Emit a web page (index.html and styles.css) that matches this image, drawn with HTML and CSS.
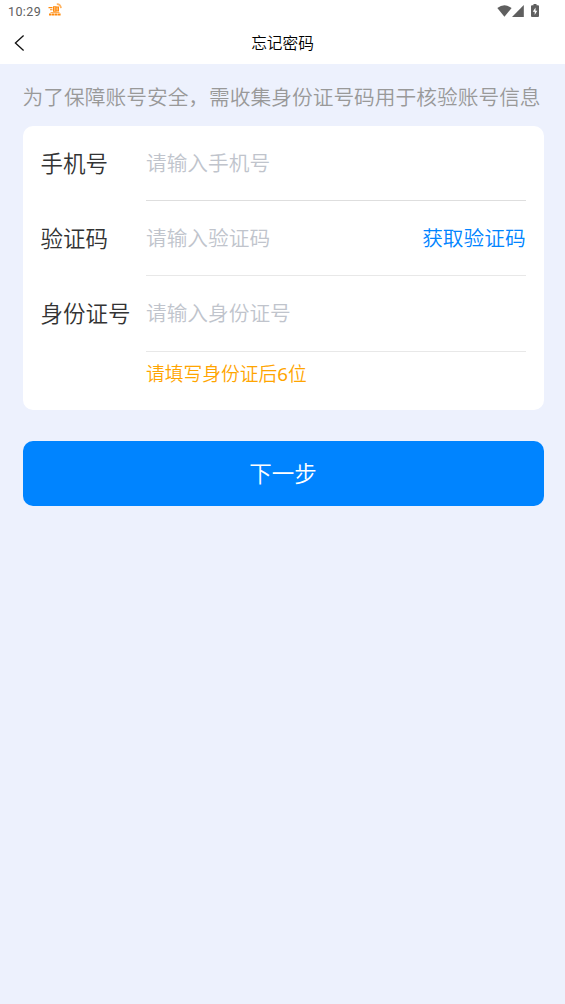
FILE: index.html
```html
<!DOCTYPE html>
<html lang="zh-CN">
<head>
<meta charset="utf-8">
<meta name="viewport" content="width=device-width, initial-scale=1">
<title>忘记密码</title>
<link rel="stylesheet" href="styles.css">
</head>
<body>
<div class="status-bar">
  <span class="clock">10:29</span>
  <svg class="app-badge" width="16" height="16" viewBox="0 0 16 16">
    <g fill="none" stroke="#ff8a0c">
      <path d="M.5 4.600h4M2 6.700h2.500" stroke-width="1.100"/>
      <path d="M5.600 3.800h2.300v4.400H5.600zM8 4.100h2.400v3.800H8.200M5.600 6h4.800" stroke-width="1.200"/>
      <path d="M8.800 1.200q3.600-.2 4.200 4" stroke-width="1.800" opacity=".65"/>
      <path d="M2.500 9.500h9" stroke-width=".7"/>
      <path d="M1 11.600h11.700" stroke-width="2" stroke-dasharray="2.600 .4"/>
    </g>
  </svg>
  <svg class="wifi" width="15" height="12" viewBox="0 0 15 12"><path d="M.3 3Q7.400-2.600 14.600 3L7.400 11.800z" fill="#5f5f5f"/></svg>
  <svg class="signal" width="12" height="12" viewBox="0 0 12 12"><path d="M11.800 0v12H0z" fill="#5f5f5f"/></svg>
  <svg class="battery" width="8" height="13" viewBox="0 0 8 13"><path d="M2.500 0h3v1.300H7q1 0 1 1V12q0 1-1 1H1q-1 0-1-1V2.300q0-1 1-1h1.500z" fill="#5f5f5f"/><path d="M4.500 3.500 1.800 7.700h1.900v3.200L6.300 6.700H4.500z" fill="#fff"/></svg>
</div>
<header class="nav">
  <svg class="back" width="11" height="18" viewBox="0 0 11 18"><path d="M9.600 1.400 1.400 9l8.200 7.600" fill="none" stroke="#111" stroke-width="1.300"/></svg>
  <h1 class="title">忘记密码</h1>
</header>
<main class="page">
  <p class="notice">为了保障账号安全，需收集身份证号码用于核验账号信息</p>
  <form class="card">
    <div class="row">
      <label class="label" for="phone">手机号</label>
      <div class="field field-first"><input id="phone" class="input" type="text" placeholder="请输入手机号"></div>
    </div>
    <div class="row">
      <label class="label" for="code">验证码</label>
      <div class="field"><input id="code" class="input" type="text" placeholder="请输入验证码"><span class="get-code">获取验证码</span></div>
    </div>
    <div class="row row-last">
      <label class="label" for="idno">身份证号</label>
      <div class="field"><input id="idno" class="input" type="text" placeholder="请输入身份证号"></div>
    </div>
    <p class="hint">请填写身份证后<span class="digit">6</span>位</p>
  </form>
  <button class="next" type="button">下一步</button>
</main>
</body>
</html>
```
FILE: styles.css
```css
* {
  box-sizing: border-box;
}
body {
  margin: 0;
  min-height: 1004px;
  background: #edf1fd;
  font-family: "Noto Sans CJK SC", sans-serif;
  font-weight: 350;
}
.status-bar {
  display: flex;
  align-items: center;
  height: 22px;
  padding: 0 26px 0 8px;
  background: #fff;
}
.clock {
  width: 39.500px;
  padding-top: 2px;
  font: 400 12.500px/22px Roboto, sans-serif;
  letter-spacing: 0.400px;
  color: #606060;
}
.app-badge {
  margin-bottom: 1px;
}
.wifi {
  margin-left: auto;
}
.signal {
  margin-left: 0.500px;
}
.battery {
  margin-left: 7px;
  margin-bottom: 1px;
}
.nav {
  display: grid;
  grid-template-columns: 40px 1fr 40px;
  align-items: center;
  height: 42px;
  background: #fff;
}
.back {
  margin-left: 14px;
}
.title {
  margin: 0;
  text-align: center;
  font-size: 15.700px;
  line-height: 24px;
  font-weight: 350;
  color: #000;
}
.page {
  padding: 17px 21.400px 0 22.600px;
}
.notice {
  margin: 0 0 14.600px;
  font-size: 20.720px;
  line-height: 30px;
  color: #999;
  white-space: nowrap;
}
.card {
  height: 284.700px;
  padding: 0 18px;
  border-radius: 10px;
  background: #fff;
}
.row {
  display: grid;
  grid-template-columns: 105.400px 1fr;
  height: 75.200px;
}
.row-last {
  height: 76px;
}
.label {
  font-size: 22.500px;
  line-height: 72px;
  color: #333;
  white-space: nowrap;
}
.field {
  display: flex;
  align-items: center;
  padding-bottom: 1.500px;
  border-bottom: 1px solid #e8e8e8;
}
.row-last .field {
  padding-bottom: 2.500px;
}
.field-first {
  border-bottom-color: #dedede;
}
.input {
  flex: 1;
  min-width: 0;
  height: 40px;
  padding: 0;
  border: 0;
  outline: 0;
  background: transparent;
  font: 350 20.700px/40px "Noto Sans CJK SC", sans-serif;
}
.input::placeholder {
  color: #c0c4cc;
}
.get-code {
  font-size: 20.700px;
  line-height: 40px;
  color: #0084ff;
}
.hint {
  margin: 8px 0 0 105.400px;
  font-family: "Noto Sans", "Noto Sans CJK SC", sans-serif;
  font-size: 18.750px;
  line-height: 28px;
  color: #ffa500;
}
.digit {
  font-weight: 400;
}
.next {
  display: block;
  width: 100%;
  height: 65.500px;
  margin-top: 30.500px;
  padding: 0 0 2px;
  border: 0;
  border-radius: 10px;
  background: #0084ff;
  color: #fff;
  font: 350 22.500px/63px "Noto Sans CJK SC", sans-serif;
}
```
